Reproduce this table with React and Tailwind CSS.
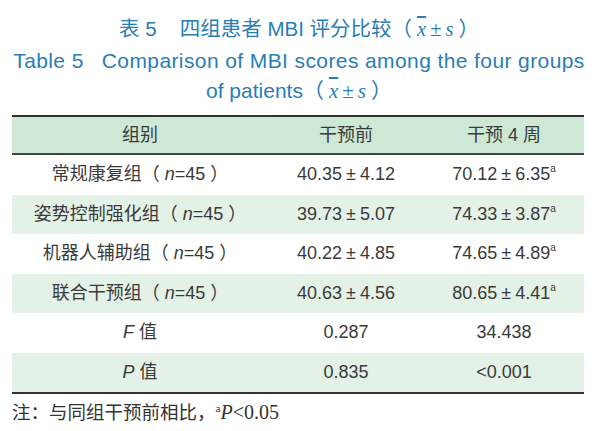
import React from "react";

const sans = { fontFamily: '"Liberation Sans", Arial, "Noto Sans CJK SC", sans-serif' };

function XS() {
  return (
    <span className="mx-[5px]" style={{ fontFamily: '"Liberation Serif", serif' }}>
      <span className="italic overline">x</span>
      <span className="mx-[4px] not-italic">±</span>
      <span className="italic">s</span>
    </span>
  );
}

function PM({ a, b, sup }) {
  return (
    <span>
      {a}
      <span className="mx-[4px]">±</span>
      {b}
      {sup && <sup className="text-[10px] -top-[8px]">a</sup>}
    </span>
  );
}

const rows = [
  { label: "常规康复组", pre: ["40.35", "4.12"], post: ["70.12", "6.35"], bg: "bg-white" },
  { label: "姿势控制强化组", pre: ["39.73", "5.07"], post: ["74.33", "3.87"], bg: "bg-[#e3f1e6]" },
  { label: "机器人辅助组", pre: ["40.22", "4.85"], post: ["74.65", "4.89"], bg: "bg-white" },
  { label: "联合干预组", pre: ["40.63", "4.56"], post: ["80.65", "4.41"], bg: "bg-[#e3f1e6]" },
];

export default function App() {
  return (
    <div className="w-[598px] h-[431px] bg-white text-[#3a3a3a] overflow-hidden" style={sans}>
      <div className="pt-[16px] text-center text-[#2a7db3]">
        <div className="text-[20.5px] leading-[26px]">
          表 5<span className="inline-block w-[23px]" />四组患者 MBI 评分比较（<XS />）
        </div>
        <div className="text-[21px] leading-[30px] mt-[4px] tracking-[0.4px] whitespace-nowrap">
          Table 5<span className="inline-block w-[18px]" />Comparison of MBI scores among the four groups
        </div>
        <div className="text-[21px] leading-[30px]">
          of patients（<XS />）
        </div>
      </div>
      <div className="mx-[12px] mt-[9px] w-[572px] border-t-2 border-b-2 border-[#333]">
        <div className="grid grid-cols-[256px_156px_160px] h-[38px] bg-[#cde8d5] border-b-2 border-[#444] items-center text-center text-[18px]">
          <div>组别</div>
          <div>干预前</div>
          <div>干预 4 周</div>
        </div>
        {rows.map((r) => (
          <div key={r.label} className={`grid grid-cols-[256px_156px_160px] h-[39.5px] items-center text-center text-[18px] ${r.bg}`}>
            <div>
              {r.label}（ <span className="italic">n</span>=45 ）
            </div>
            <div>
              <PM a={r.pre[0]} b={r.pre[1]} />
            </div>
            <div>
              <PM a={r.post[0]} b={r.post[1]} sup />
            </div>
          </div>
        ))}
        <div className="grid grid-cols-[256px_156px_160px] h-[39.5px] items-center text-center text-[18px] bg-white">
          <div>
            <span className="italic">F</span> 值
          </div>
          <div>0.287</div>
          <div>34.438</div>
        </div>
        <div className="grid grid-cols-[256px_156px_160px] h-[39.5px] items-center text-center text-[18px] bg-[#e3f1e6]">
          <div>
            <span className="italic">P</span> 值
          </div>
          <div>0.835</div>
          <div>&lt;0.001</div>
        </div>
      </div>
      <div className="ml-[12px] mt-[6px] text-[18.5px] leading-[24px] text-[#333]" style={{ fontFamily: '"Liberation Serif", "Noto Sans CJK SC", serif' }}>
        注：与同组干预前相比，<sup className="text-[11px] -top-[7px]">a</sup>
        <span className="text-[20px]">
          <span className="italic">P</span>&lt;0.05
        </span>
      </div>
    </div>
  );
}
